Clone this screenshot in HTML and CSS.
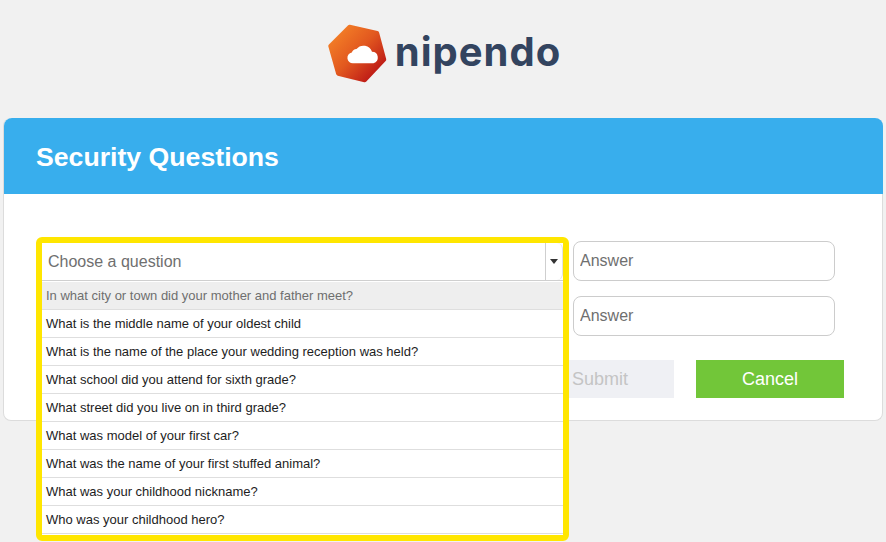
FILE: index.html
```html
<!DOCTYPE html>
<html lang="en">
<head>
<meta charset="utf-8">
<title>Security Questions</title>
<link rel="stylesheet" href="styles.css">
</head>
<body>
<header class="brand">
  <svg class="brand-mark" width="70" height="70" viewBox="0 0 70 70" aria-hidden="true">
    <defs>
      <linearGradient id="markFill" x1="0.1" y1="0.15" x2="0.85" y2="0.85">
        <stop offset="0" stop-color="#f27c26"/>
        <stop offset="0.5" stop-color="#e2581f"/>
        <stop offset="1" stop-color="#bf1d17"/>
      </linearGradient>
    </defs>
    <path d="M24.5 7 L52 13.3 L59 39.5 L39.7 60 L13.3 53.5 L5.5 26 Z" fill="url(#markFill)" stroke="url(#markFill)" stroke-width="4.5" stroke-linejoin="round"/>
    <path d="M28 43.2 A5.4 5.4 0 0 1 26.8 32.5 A5.6 5.6 0 0 1 31.5 29 A9 9 0 0 1 47 31.8 A5.8 5.8 0 0 1 48.5 43.2 Z" fill="#fff"/>
  </svg>
  <span class="brand-name">nipendo</span>
</header>
<main class="card">
  <h1 class="card-title">Security Questions</h1>
  <form class="card-body">
    <div class="question-grid">
      <div class="picker-slot">
        <div class="picker">
          <div class="picker-head">
            <span class="picker-label">Choose a question</span>
            <span class="picker-toggle"><span class="picker-arrow"></span></span>
          </div>
          <ul class="picker-list">
            <li class="picker-item is-muted">In what city or town did your mother and father meet?</li>
            <li class="picker-item">What is the middle name of your oldest child</li>
            <li class="picker-item">What is the name of the place your wedding reception was held?</li>
            <li class="picker-item">What school did you attend for sixth grade?</li>
            <li class="picker-item">What street did you live on in third grade?</li>
            <li class="picker-item">What was model of your first car?</li>
            <li class="picker-item">What was the name of your first stuffed animal?</li>
            <li class="picker-item">What was your childhood nickname?</li>
            <li class="picker-item">Who was your childhood hero?</li>
          </ul>
        </div>
      </div>
      <input class="answer" type="text" placeholder="Answer">
      <div class="picker-slot"></div>
      <input class="answer" type="text" placeholder="Answer">
    </div>
    <div class="actions">
      <button class="btn btn-submit" type="button">Submit</button>
      <button class="btn btn-cancel" type="button">Cancel</button>
    </div>
  </form>
</main>
</body>
</html>
```

FILE: styles.css
```css
* {
  box-sizing: border-box;
}

html,
body {
  margin: 0;
  height: 100%;
  overflow: hidden;
}

body {
  background: #f1f1f1;
  font-family: "Liberation Sans", Arial, sans-serif;
  padding: 0 3px;
}

.brand {
  height: 118px;
  display: flex;
  align-items: flex-start;
  justify-content: center;
  padding-top: 20px;
}

.brand-mark {
  display: block;
  flex: none;
}

.brand-name {
  font-family: Inter, sans-serif;
  font-weight: 700;
  font-size: 40px;
  line-height: 64px;
  letter-spacing: 1px;
  color: #33445f;
}

.card {
  background: #fff;
  border: 1px solid #dcdcdc;
  border-top: 0;
  border-radius: 8px;
  height: 303px;
}

.card-title {
  margin: 0 -1px 0 0;
  height: 76px;
  background: #38aeed;
  border-radius: 8px 8px 0 0;
  color: #fff;
  font-size: 26.67px;
  font-weight: 700;
  line-height: 79px;
  padding-left: 32px;
}

.card-body {
  padding: 47px 38px 0 33px;
}

.question-grid {
  display: grid;
  grid-template-columns: 533px 262px;
  column-gap: 3px;
  row-gap: 15px;
}

.picker-slot {
  position: relative;
  height: 40px;
}

.picker {
  position: absolute;
  left: -1px;
  top: -4px;
  width: 533px;
  height: 304px;
  border: 6px solid #ffe600;
  border-radius: 6px;
  background: #fff;
  z-index: 2;
}

.picker-head {
  display: flex;
  height: 38px;
  margin-bottom: 1px;
  border-bottom: 1px solid #cfcfcf;
}

.picker-label {
  flex: 1;
  font-size: 16px;
  line-height: 37px;
  color: #6f6f6f;
  padding-left: 6px;
  border-right: 1px solid #cfcfcf;
}

.picker-toggle {
  width: 17px;
  display: flex;
  align-items: center;
  justify-content: center;
  border-right: 1px solid #e2e2e2;
  border-radius: 0 6px 6px 0;
}

.picker-arrow {
  width: 0;
  height: 0;
  border-left: 4px solid transparent;
  border-right: 4px solid transparent;
  border-top: 5px solid #333;
}

.picker-list {
  list-style: none;
  margin: 0;
  padding: 0;
}

.picker-item {
  height: 28px;
  font-size: 13px;
  line-height: 28px;
  color: #1d1d1d;
  padding-left: 4px;
  border-bottom: 1px solid #dedede;
}

.picker-item.is-muted {
  background: #eeeeee;
  color: #6f6f6f;
}

.answer {
  display: block;
  width: 262px;
  height: 40px;
  border: 1px solid #cccccc;
  border-radius: 8px;
  padding: 0 6px;
  background: #fff;
  font-family: inherit;
  font-size: 16px;
  color: #333;
}

.answer::placeholder {
  color: #6f6f6f;
  opacity: 1;
}

.actions {
  display: flex;
  justify-content: flex-end;
  gap: 22px;
  margin-top: 24px;
}

.btn {
  width: 148px;
  height: 38px;
  border: 0;
  padding: 0;
  font-family: inherit;
  font-size: 18px;
}

.btn-submit {
  background: #eff0f4;
  color: #c4c4c4;
}

.btn-cancel {
  background: #72c639;
  color: #fff;
}
```
